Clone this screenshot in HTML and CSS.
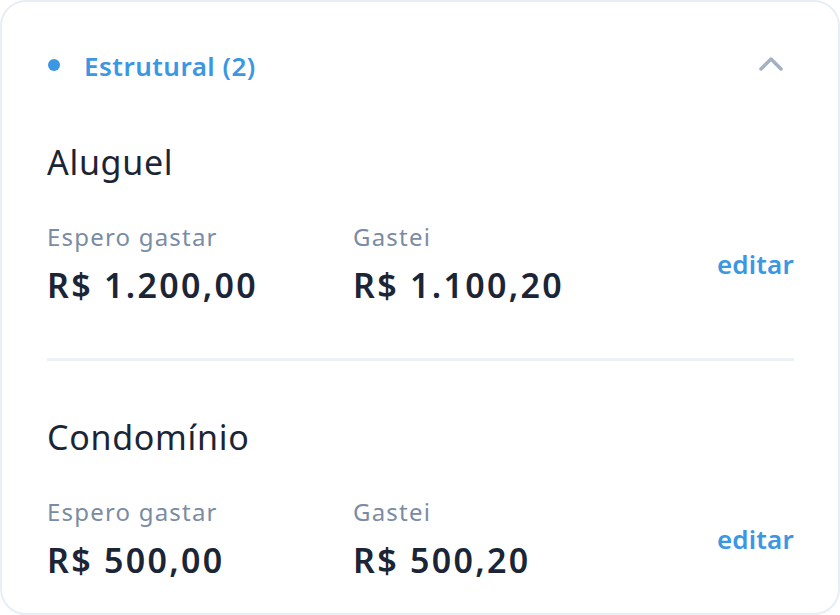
FILE: index.html
```html
<!DOCTYPE html>
<html lang="pt-BR">
<head>
<meta charset="utf-8">
<title>Estrutural</title>
<link rel="stylesheet" href="styles.css">
</head>
<body>
<section class="card">
  <header class="header">
    <span class="dot"></span>
    <h2 class="group-title">Estrutural (2)</h2>
    <svg class="chevron" width="30" height="20" viewBox="0 0 30 20"><path d="M5 15 L15 5 L25 15" fill="none" stroke="#a3b1c2" stroke-width="3.5" stroke-linecap="round" stroke-linejoin="round"/></svg>
  </header>
  <article class="item">
    <h3 class="item-title">Aluguel</h3>
    <div class="row">
      <div class="col">
        <div class="label">Espero gastar</div>
        <div class="amount">R$ 1.200,00</div>
      </div>
      <div class="col">
        <div class="label">Gastei</div>
        <div class="amount">R$ 1.100,20</div>
      </div>
      <a class="edit">editar</a>
    </div>
  </article>
  <hr class="divider">
  <article class="item">
    <h3 class="item-title">Condomínio</h3>
    <div class="row">
      <div class="col">
        <div class="label">Espero gastar</div>
        <div class="amount">R$ 500,00</div>
      </div>
      <div class="col">
        <div class="label">Gastei</div>
        <div class="amount">R$ 500,20</div>
      </div>
      <a class="edit">editar</a>
    </div>
  </article>
</section>
</body>
</html>
```
FILE: styles.css
```css
* { box-sizing: border-box; }
html, body { margin: 0; padding: 0; background: #ffffff; }
body { font-family: "Noto Sans", "Open Sans", sans-serif; color: #1b2536; }
.card {
  width: 840px;
  height: 615px;
  border: 2px solid #e8eef5;
  border-radius: 26px;
  padding: 48px 44px 0 45px;
  overflow: hidden;
}
.header {
  display: flex;
  align-items: center;
  height: 32px;
}
.dot {
  width: 12px;
  height: 12px;
  border-radius: 50%;
  background: #3b97e3;
  margin-left: 1px;
  margin-right: 24px;
  margin-top: -3px;
}
.group-title {
  margin: 0;
  font-size: 26px;
  line-height: 32px;
  font-weight: 600;
  letter-spacing: 0.5px;
  color: #3b97e3;
  flex: 1;
}
.chevron { margin-right: 8px; margin-top: -5px; }
.item { padding-top: 60px; }
.divider + .item { padding-top: 56px; }
.item-title {
  margin: 0;
  font-size: 34px;
  line-height: 40px;
  font-weight: 400;
  letter-spacing: 0.7px;
  color: #1b2536;
}
.row {
  display: grid;
  grid-template-columns: 306px 1fr auto;
  align-items: center;
  margin-top: 40px;
}
.label {
  font-size: 24px;
  line-height: 30px;
  letter-spacing: 1.2px;
  color: #7a8ca4;
}
.amount {
  margin-top: 13px;
  font-size: 34px;
  line-height: 40px;
  font-weight: 600;
  letter-spacing: 2.3px;
  color: #1b2536;
}
.edit {
  font-size: 26px;
  line-height: 32px;
  font-weight: 600;
  letter-spacing: 0.2px;
  color: #3b97e3;
  margin-top: 1px;
}
.divider {
  border: 0;
  height: 3px;
  background: #edf1f6;
  margin: 53px 0 0;
}
```
